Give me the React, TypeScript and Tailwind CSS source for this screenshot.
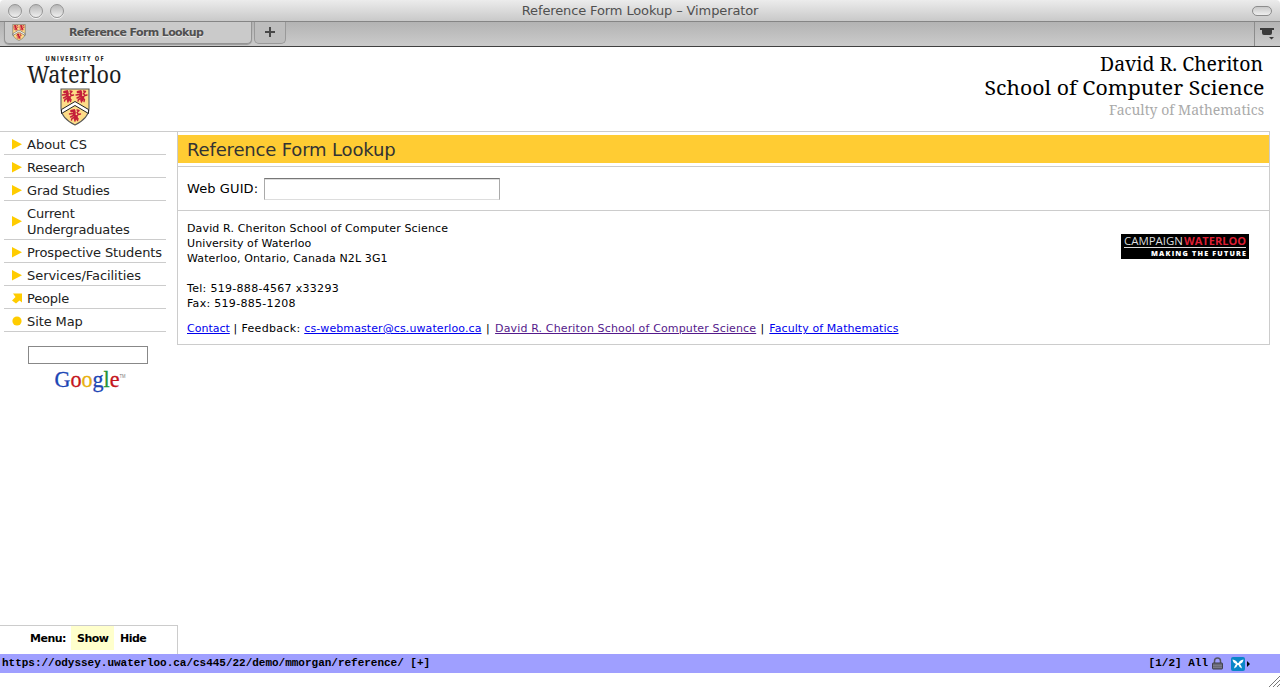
import React from "react";

const VERDANA = "font-['DejaVu_Sans',sans-serif]";

function Lion({ x, y }: { x: number; y: number }) {
  return (
    <g transform={`translate(${x} ${y})`} fill="none" stroke="#c41e3a" strokeLinecap="round" strokeLinejoin="round">
      <path d="M3 3 L5.500 2.500 L6 5 L5.500 7 L8 9 L7 11" strokeWidth="2.800" />
      <path d="M4.500 5.500 L1 6 M5 7.500 L2 9 M6.500 9 L3.500 10.500 L3 12 M7 9 L9.500 10.500 L9 12.500 M6 11 L6.500 13 M8 8 L10 6.500 L8.500 4.500 L10.500 2.500 M10.500 2.500 L8.500 2 M10 6.500 L12 6" strokeWidth="1.400" />
    </g>
  );
}

function Shield({ className }: { className: string }) {
  return (
    <svg className={className} viewBox="0 0 30 38">
      <path d="M1 1 H29 V20 C29 29 21 34 15 37 C9 34 1 29 1 20 Z" fill="#fddc88" stroke="#555" strokeWidth="1.100" />
      <path d="M1.500 21.500 L15 13.500 L28.500 21.500 V25.500 L15 17.500 L1.500 25.500 Z" fill="#fff" stroke="#222" strokeWidth="1" />
      <Lion x={1.5} y={1} />
      <Lion x={15} y={1} />
      <Lion x={8.5} y={20} />
    </svg>
  );
}

function WaterlooLogo() {
  return (
    <div className="ml-[26px] flex w-[97px] flex-col items-center pt-[4px]">
      <svg className="h-[12px] w-[97px] overflow-visible" viewBox="26 51 97 12">
        <text x="45.500" y="61.200" textLength="58" lengthAdjust="spacing" fontFamily="'Open Sans Condensed', 'Liberation Sans Narrow', 'Open Sans', sans-serif" fontWeight="700" fontSize="7.500" fill="#222">
          UNIVERSITY OF
        </text>
      </svg>
      <svg className="h-[24px] w-[97px] overflow-visible" viewBox="26 63 97 24">
        <text x="27" y="83.300" textLength="94.500" lengthAdjust="spacingAndGlyphs" fontFamily="'Noto Serif', 'Liberation Serif', serif" fontSize="24" fill="#1d1d1d">
          Waterloo
        </text>
      </svg>
      <Shield className="mt-[0.500px] h-[38px] w-[30px]" />
    </div>
  );
}

function SchoolTitle() {
  return (
    <svg className="mr-[10px] mt-px h-[80px] w-[294px] overflow-visible" viewBox="976 48 294 80" fontFamily="'Noto Serif', 'Liberation Serif', serif">
      <text x="1100" y="71" textLength="163" lengthAdjust="spacingAndGlyphs" fontSize="20">David R. Cheriton</text>
      <text x="984.500" y="95" textLength="280" lengthAdjust="spacingAndGlyphs" fontSize="20.500">School of Computer Science</text>
      <text x="1109" y="115" textLength="155" lengthAdjust="spacingAndGlyphs" fontSize="14" fill="#aaa">Faculty of Mathematics</text>
    </svg>
  );
}

type Marker = "triangle" | "arrow" | "dot";

function MarkerIcon({ kind }: { kind: Marker }) {
  return (
    <svg className="mr-[5px] h-[11px] w-[10px] shrink-0 -translate-y-px" viewBox="0 0 10 11" fill="#fc0">
      {kind === "triangle" && <path d="M0 0 L10 5.200 L0 10.500 Z" />}
      {kind === "arrow" && <path d="M1 0.500 H10 V9.500 L7.500 7.500 L4 10.500 L0 7.500 L3.500 4 Z" />}
      {kind === "dot" && <circle cx="5" cy="5" r="4.600" />}
    </svg>
  );
}

const NAV: { lines: string[]; kind: Marker; tracking: string }[] = [
  { lines: ["About CS"], kind: "triangle", tracking: "tracking-[0px]" },
  { lines: ["Research"], kind: "triangle", tracking: "tracking-[-0.25px]" },
  { lines: ["Grad Studies"], kind: "triangle", tracking: "tracking-[-0.1px]" },
  { lines: ["Current", "Undergraduates"], kind: "triangle", tracking: "tracking-[-0.18px]" },
  { lines: ["Prospective Students"], kind: "triangle", tracking: "tracking-[-0.12px]" },
  { lines: ["Services/Facilities"], kind: "triangle", tracking: "tracking-[-0.05px]" },
  { lines: ["People"], kind: "arrow", tracking: "tracking-[-0.2px]" },
  { lines: ["Site Map"], kind: "dot", tracking: "tracking-[-0.1px]" },
];

function GoogleLogo() {
  return (
    <svg className="ml-[54px] mt-[3px] h-[28px] w-[74px] overflow-visible" viewBox="54 367 74 28">
      <text x="54.500" y="386.500" textLength="65" lengthAdjust="spacingAndGlyphs" fontFamily="'Liberation Serif', serif" fontSize="22.500" strokeWidth="0.300">
        <tspan fill="#1b45b4" stroke="#1b45b4">G</tspan>
        <tspan fill="#c5161d" stroke="#c5161d">o</tspan>
        <tspan fill="#e8b00f" stroke="#e8b00f">o</tspan>
        <tspan fill="#1b45b4" stroke="#1b45b4">g</tspan>
        <tspan fill="#239337" stroke="#239337">l</tspan>
        <tspan fill="#c5161d" stroke="#c5161d">e</tspan>
      </text>
      <text x="119.500" y="377.500" textLength="6" lengthAdjust="spacingAndGlyphs" fontFamily="'Liberation Sans', sans-serif" fontSize="4.500" fill="#777">TM</text>
    </svg>
  );
}

function CampaignLogo() {
  return (
    <svg className="mr-[20px] mt-[23px] h-[25px] w-[128px]" viewBox="0 0 128 25" fontFamily="'Open Sans', sans-serif">
      <rect width="128" height="25" fill="#000" />
      <text x="3" y="10.700" textLength="59" lengthAdjust="spacingAndGlyphs" fontSize="10.500" fill="#ddd">CAMPAIGN</text>
      <text x="63" y="10.700" textLength="62" lengthAdjust="spacingAndGlyphs" fontSize="10.500" fontWeight="700" fill="#dd1f33">WATERLOO</text>
      <rect x="3" y="13" width="122" height="1" fill="#ddd" />
      <text x="30" y="21.700" textLength="95" lengthAdjust="spacing" fontSize="7.200" fontWeight="800" fill="#fff">MAKING THE FUTURE</text>
    </svg>
  );
}

function TitleBar() {
  const ring = "h-[14px] w-[14px] rounded-full border border-[#959595] bg-gradient-to-b from-[#b8b8b8] to-[#efefef] shadow-[0_1px_0_#f4f4f4]";
  return (
    <div className="flex h-[22px] shrink-0 items-center rounded-t-[4px] border-b border-[#858585] bg-gradient-to-b from-[#ececec] to-[#c9c9c9]">
      <div className="flex w-[100px] gap-[7px] pl-[8px]">
        <div className={ring} />
        <div className={ring} />
        <div className={ring} />
      </div>
      <div className="flex-1 pt-px text-center text-[13px] tracking-[-0.120px] text-[#505050]">
        Reference Form Lookup – Vimperator
      </div>
      <div className="flex w-[100px] justify-end pr-[8px]">
        <div className="h-[10px] w-[20px] rounded-[5px] border border-[#8c8c8c] bg-gradient-to-b from-[#c9c9c9] to-[#eee]" />
      </div>
    </div>
  );
}

function TabBar() {
  return (
    <div className="flex h-[25px] shrink-0 items-start border-b border-[#404040] bg-gradient-to-b from-[#b3b3b3] to-[#cbcbcb] pl-[4px]">
      <div className="flex h-[22px] w-[248px] items-center rounded-b-[5px] border border-t-0 border-[#949494] bg-[#cacaca] shadow-[0_1px_1px_#999]">
        <Shield className="ml-[7px] h-[17px] w-[14px]" />
        <span className="ml-[43px] mt-[2px] text-[11px] font-bold tracking-[-0.620px] text-[#505050] [text-shadow:0_1px_0_#e4e4e4]">Reference Form Lookup</span>
      </div>
      <div className="ml-[2px] flex h-[22px] w-[32px] items-center justify-center rounded-b-[5px] border border-t-0 border-[#999] bg-[#bdbdbd] pb-[2px] pr-px">
        <svg className="h-[10px] w-[10px]" viewBox="0 0 10 10">
          <path d="M5 0 V10 M0 5 H10" stroke="#484848" strokeWidth="2" />
        </svg>
      </div>
      <div className="ml-auto h-[24px] w-[26px] border-l border-[#8c8c8c] pl-[5px] pt-[5px]">
        <svg className="h-[14px] w-[15px]" viewBox="0 0 15 14" fill="#3b3b3b">
          <path d="M0 1 H14 V3 H12 V6 Q12 8 10 8 H4 Q2 8 2 6 V3 H0 Z M9 10 H14 L11.500 12.500 Z" />
        </svg>
      </div>
    </div>
  );
}

function StatusBar() {
  return (
    <div className="flex h-[19px] shrink-0 items-center bg-[#9f9fff] pl-[2px] pr-[29px] font-['Liberation_Mono',monospace] text-[11px] font-bold text-black">
      <span className="tracking-[-0.015px]">https://odyssey.uwaterloo.ca/cs445/22/demo/mmorgan/reference/ [+]</span>
      <span className="ml-auto whitespace-pre">[1/2] All</span>
      <svg className="ml-[4px] h-[13px] w-[11px]" viewBox="0 0 11 13">
        <path d="M2.500 7 V4 Q2.500 1 5.500 1 Q8.500 1 8.500 4 V7" fill="none" stroke="#55555f" strokeWidth="1.500" />
        <rect x="0.500" y="6" width="10" height="6" rx="0.600" fill="#696977" stroke="#41414e" />
        <path d="M1 8.500 H10 M1 10.500 H10" stroke="#858594" strokeWidth="0.600" />
      </svg>
      <svg className="ml-[8px] h-[14px] w-[20px]" viewBox="0 0 20 14">
        <rect width="14" height="14" rx="2" fill="#0a86c8" />
        <path d="M1.500 2.500 Q5.500 3 6.500 6 H7.500 Q8.500 3 12.500 2.500 Q12 6 9 7 Q10.500 8.500 11 11.500 Q8 10.500 7.500 8 H6.500 Q6 10.500 3 11.500 Q3.500 8.500 5 7 Q2 6 1.500 2.500 Z" fill="#fff" />
        <path d="M16 4 L19 7 L16 10 Z" />
      </svg>
    </div>
  );
}

export default function App() {
  return (
    <div className={`flex h-[687px] w-[1280px] flex-col overflow-hidden bg-white ${VERDANA}`}>
      <TitleBar />
      <TabBar />
      <header className="flex h-[84px] shrink-0 items-start justify-between">
        <WaterlooLogo />
        <SchoolTitle />
      </header>
      <div className="flex min-h-0 flex-1">
        <aside className="flex w-[177px] flex-col border-t border-[#ccc]">
          <nav className="ml-[4px] w-[162px] text-[13px] leading-[16px] text-[#222]">
            {NAV.map((item) => (
              <a key={item.lines[0]} className="flex items-center border-b border-[#ccc] pb-px pl-[8px] pt-[5px]">
                <MarkerIcon kind={item.kind} />
                <span className={`whitespace-nowrap ${item.tracking}`}>
                  {item.lines.map((line) => (
                    <span key={line} className="block">{line}</span>
                  ))}
                </span>
              </a>
            ))}
          </nav>
          <input className="ml-[28px] mt-[14px] h-[18px] w-[120px] shrink-0 border border-[#888] bg-white" />
          <GoogleLogo />
          <div className="mt-auto flex h-[29px] w-[178px] shrink-0 items-start border-r border-t border-[#ccc] pl-[30px] text-[11px] font-bold tracking-[-0.500px] text-black">
            <span className="h-[24px] w-[41px] pt-px leading-[24px]">Menu:</span>
            <span className="h-[24px] w-[43px] bg-[#ffc] pl-[6px] pt-px leading-[24px]">Show</span>
            <span className="h-[24px] pl-[6px] pt-px leading-[24px]">Hide</span>
          </div>
        </aside>
        <main className="h-[214px] w-[1093px] border border-[#ccc]">
          <h1 className="mt-[3px] h-[28px] bg-[#fc3] pl-[9px] pt-px text-[18px] leading-[28px] tracking-[-0.160px] text-[#333]">Reference Form Lookup</h1>
          <div className="mt-[3px] flex h-[45px] items-center border-y border-[#ccc] pl-[9px] text-[13px]">
            <label className="w-[77px] tracking-[0.100px]">Web GUID:</label>
            <input className="h-[22px] w-[236px] border border-b-[#ddd] border-l-[#aaa] border-r-[#aaa] border-t-[#777] bg-white shadow-[inset_0_1px_0_#ddd]" />
          </div>
          <footer className="pl-[9px] text-[11px] leading-[15px] text-black">
            <div className="flex justify-between">
              <address className="h-[101px] pt-[10px] not-italic">
                <span className="block tracking-[0.140px]">David R. Cheriton School of Computer Science</span>
                <span className="block tracking-[0.100px]">University of Waterloo</span>
                <span className="block tracking-[0.120px]">Waterloo, Ontario, Canada N2L 3G1</span>
                <span className="mt-[15px] block tracking-[0.300px]">Tel: 519-888-4567 x33293</span>
                <span className="block tracking-[0.300px]">Fax: 519-885-1208</span>
              </address>
              <CampaignLogo />
            </div>
            <p className="mt-[9px] flex whitespace-pre">
              <a className="text-[#00e] underline">Contact</a>
              <span className="tracking-[0.320px]"> | Feedback: </span>
              <a className="tracking-[0.100px] text-[#00e] underline">cs-webmaster@cs.uwaterloo.ca</a>
              <span className="tracking-[0.950px]"> | </span>
              <a className="tracking-[0.140px] text-[#551a8b] underline">David R. Cheriton School of Computer Science</a>
              <span className="tracking-[0.800px]"> | </span>
              <a className="tracking-[0.080px] text-[#00e] underline">Faculty of Mathematics</a>
            </p>
          </footer>
        </main>
      </div>
      <StatusBar />
      <div className="flex h-[14px] shrink-0 items-end justify-end">
        <svg className="h-[12px] w-[12px]" viewBox="0 0 12 12">
          <path d="M1 12 L12 1 M5 12 L12 5 M9 12 L12 9" stroke="#777" strokeWidth="1" />
        </svg>
      </div>
    </div>
  );
}
